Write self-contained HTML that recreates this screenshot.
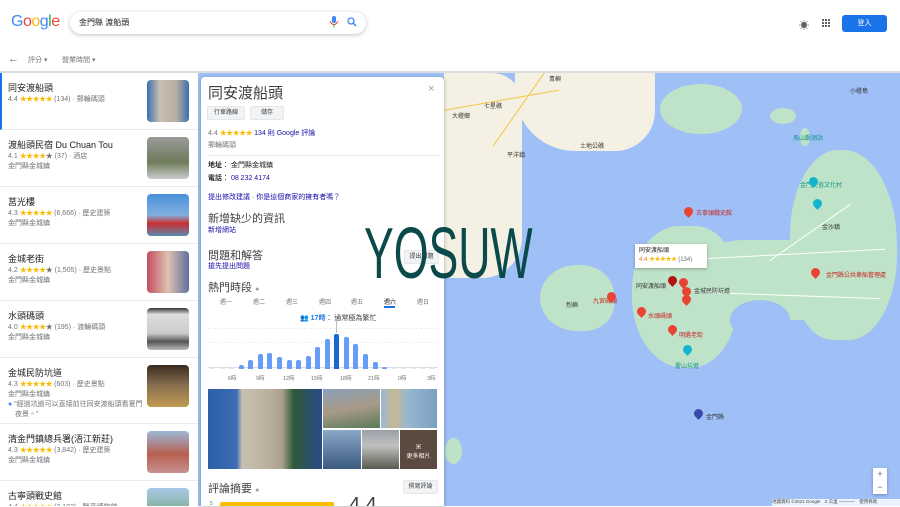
<!DOCTYPE html>
<html><head><meta charset="utf-8">
<style>
*{margin:0;padding:0;box-sizing:border-box}
body{width:900px;height:506px;overflow:hidden;background:#fff;font-family:"Liberation Sans","Noto Sans CJK TC",sans-serif;position:relative;color:#202124}
.a{position:absolute}
.s{color:#70757a;font-size:7px}
.st{color:#fbbc04;letter-spacing:-0.5px}
.li{position:absolute;left:0;width:198px;border-bottom:1px solid #e8eaed;background:#fff;overflow:hidden}
.li .t{position:absolute;left:8px;top:8px;font-size:9px;color:#202124}
.li .r{position:absolute;left:8px;top:21px;font-size:7px;color:#70757a}
.li .d{position:absolute;left:8px;top:31px;font-size:7px;color:#70757a}
.li .im{position:absolute;left:147px;top:7px;width:42px;height:42px;border-radius:4px}
.lnk{color:#1a0dab}
.btn{position:absolute;background:#f1f3f4;border:1px solid #e4e6e8;border-radius:2px;font-size:6px;text-align:center;line-height:12px;color:#3c4043}
.bar{position:absolute;width:5px;background:#669df6;border-radius:2px 2px 0 0}
.pin{position:absolute;width:9px;height:9px;border-radius:50% 50% 50% 0;transform:rotate(-45deg);background:#ea4335}
.ml{position:absolute;font-size:6px;color:#c5221f;white-space:nowrap}
.g{position:absolute;background:#bfe3c8}
.b{position:absolute;background:#f4f0e3}
</style></head><body>
<!-- map -->
<div class="a" style="left:198px;top:73px;width:702px;height:433px;background:#9fc0f7"></div>
<div class="b" style="left:444px;top:73px;width:78px;height:205px;border-radius:0 30px 40px 0"></div>
<div class="b" style="left:515px;top:73px;width:140px;height:78px;border-radius:0 0 40px 60px"></div>
<div class="g" style="left:660px;top:84px;width:82px;height:50px;border-radius:50%"></div>
<div class="g" style="left:770px;top:108px;width:26px;height:16px;border-radius:50%"></div>
<div class="g" style="left:800px;top:128px;width:10px;height:18px;border-radius:50%"></div>
<div class="g" style="left:790px;top:150px;width:107px;height:190px;border-radius:45% 50% 45% 40%"></div>
<div class="g" style="left:700px;top:240px;width:150px;height:80px;border-radius:30% 20% 30% 40%"></div>
<div class="g" style="left:632px;top:226px;width:105px;height:142px;border-radius:45% 40% 45% 50%"></div>
<div class="a" style="left:730px;top:300px;width:60px;height:40px;border-radius:50%;background:#9fc0f7"></div>
<div class="g" style="left:540px;top:265px;width:74px;height:66px;border-radius:50% 45% 40% 50%"></div>
<div class="g" style="left:445px;top:438px;width:17px;height:26px;border-radius:50%"></div>
<div class="a" style="left:645px;top:255px;width:240px;height:0;border-top:1px solid #fff;transform:rotate(-3deg)"></div>
<div class="a" style="left:700px;top:295px;width:180px;height:0;border-top:1px solid #fff;transform:rotate(2deg)"></div>
<div class="a" style="left:760px;top:232px;width:100px;height:0;border-top:1px solid #fff;transform:rotate(-35deg)"></div>
<div class="a" style="left:470px;top:100px;width:110px;height:0;border-top:1.5px solid #f6c545;transform:rotate(-55deg)"></div>
<div class="a" style="left:440px;top:100px;width:120px;height:0;border-top:1.5px solid #f6c545;transform:rotate(-10deg)"></div>
<div class="ml" style="left:549px;top:74px;color:#333">青嶼</div>
<div class="ml" style="left:850px;top:86px;color:#333">小嶝島</div>
<div class="ml" style="left:484px;top:101px;color:#333">七星礁</div>
<div class="ml" style="left:452px;top:111px;color:#333">大嶝鄉</div>
<div class="ml" style="left:580px;top:141px;color:#333">土地公礁</div>
<div class="ml" style="left:507px;top:150px;color:#333">平洋鎮</div>
<div class="ml" style="left:793px;top:133px;color:#12928c">馬山觀測站</div>
<div class="ml" style="left:800px;top:180px;color:#12928c">金門民俗文化村</div>
<div class="ml" style="left:822px;top:222px;color:#333">金沙鎮</div>
<div class="ml" style="left:696px;top:208px">古寧頭戰史館</div>
<div class="ml" style="left:826px;top:270px">金門縣公共車船管理處</div>
<div class="ml" style="left:593px;top:296px">九宮碼頭</div>
<div class="ml" style="left:648px;top:311px">水頭碼頭</div>
<div class="ml" style="left:679px;top:330px">明遺老街</div>
<div class="ml" style="left:694px;top:286px;color:#333">金城民防坑道</div>
<div class="ml" style="left:675px;top:361px;color:#12928c">翟山坑道</div>
<div class="ml" style="left:706px;top:412px;color:#333">金門縣</div>
<div class="ml" style="left:566px;top:300px;color:#333">烈嶼</div>
<div class="ml" style="left:636px;top:281px;color:#333">同安渡船頭</div>
<div class="pin" style="left:684px;top:207px"></div>
<div class="pin" style="left:811px;top:268px"></div>
<div class="pin" style="left:607px;top:292px"></div>
<div class="pin" style="left:637px;top:307px"></div>
<div class="pin" style="left:668px;top:325px"></div>
<div class="pin" style="left:668px;top:276px;background:#b31412"></div>
<div class="pin" style="left:679px;top:278px"></div>
<div class="pin" style="left:682px;top:287px"></div>
<div class="pin" style="left:682px;top:295px"></div>
<div class="pin" style="left:809px;top:177px;background:#12b5cb"></div>
<div class="pin" style="left:813px;top:199px;background:#12b5cb"></div>
<div class="pin" style="left:683px;top:345px;background:#12b5cb"></div>
<div class="pin" style="left:694px;top:409px;background:#3949ab"></div>
<div class="a" style="left:635px;top:244px;width:72px;height:24px;background:#fff;box-shadow:0 1px 3px rgba(0,0,0,.3);font-size:6px;padding:3px 4px;line-height:9px">同安渡船頭<br><span style="color:#e7711b">4.4</span> <span class="st">★★★★★</span> <span style="color:#70757a">(134)</span></div>
<div class="a" style="left:873px;top:468px;width:14px;height:26px;background:#fff;box-shadow:0 1px 3px rgba(0,0,0,.3);font-size:9px;text-align:center;line-height:13px;color:#666">+<br>−</div>
<div class="a" style="left:772px;top:499px;width:128px;height:7px;background:rgba(255,255,255,.8);font-size:4.5px;color:#444;white-space:nowrap;overflow:hidden">地圖資料 ©2021 Google　2 公里 ─────　使用條款</div>

<!-- header -->
<div class="a" style="left:0;top:0;width:900px;height:71px;background:#fff"></div>
<div class="a" style="left:11px;top:13px;font-size:16px;letter-spacing:-0.5px"><span style="color:#4285f4">G</span><span style="color:#ea4335">o</span><span style="color:#fbbc05">o</span><span style="color:#4285f4">g</span><span style="color:#34a853">l</span><span style="color:#ea4335">e</span></div>
<div class="a" style="left:70px;top:12px;width:296px;height:22px;border-radius:11px;box-shadow:0 1px 4px rgba(0,0,0,.25);background:#fff"></div>
<div class="a" style="left:79px;top:17px;font-size:8px">金門縣 渡船頭</div>
<svg class="a" style="left:329px;top:16px" width="10" height="12" viewBox="0 0 10 12"><rect x="3" y="0" width="4" height="7" rx="2" fill="#4285f4"/><path d="M1.5 5a3.5 3.5 0 0 0 7 0" stroke="#ea4335" fill="none" stroke-width="1"/><rect x="4.5" y="8.5" width="1" height="3" fill="#34a853"/></svg>
<svg class="a" style="left:347px;top:17px" width="10" height="10" viewBox="0 0 10 10"><circle cx="4" cy="4" r="3" stroke="#4285f4" stroke-width="1.3" fill="none"/><path d="M6.2 6.2L9 9" stroke="#4285f4" stroke-width="1.5" fill="none"/></svg>
<div class="a" style="left:799px;top:17px;font-size:10px;color:#5f6368">☀</div>
<svg class="a" style="left:822px;top:19px" width="8" height="8"><g fill="#5f6368"><rect x="0" y="0" width="2" height="2"/><rect x="3" y="0" width="2" height="2"/><rect x="6" y="0" width="2" height="2"/><rect x="0" y="3" width="2" height="2"/><rect x="3" y="3" width="2" height="2"/><rect x="6" y="3" width="2" height="2"/><rect x="0" y="6" width="2" height="2"/><rect x="3" y="6" width="2" height="2"/><rect x="6" y="6" width="2" height="2"/></g></svg>
<div class="a" style="left:842px;top:15px;width:45px;height:17px;background:#1a73e8;border-radius:3px;color:#fff;font-size:7px;text-align:center;line-height:17px">登入</div>
<div class="a" style="left:8px;top:53px;font-size:11px;color:#5f6368">←</div>
<div class="a" style="left:28px;top:55px;font-size:7px;color:#70757a">評分 ▾</div>
<div class="a" style="left:62px;top:55px;font-size:7px;color:#70757a">營業時間 ▾</div>
<div class="a" style="left:0;top:71px;width:900px;height:2px;background:#dadce0"></div>

<!-- list -->
<div class="li" style="top:73px;height:57px;border-left:2px solid #1a73e8"><div class="t" style="left:6px">同安渡船頭</div><div class="r" style="left:6px">4.4 <span class="st">★★★★★</span> (134) · 郵輪碼頭</div><div class="im" style="left:145px;background:linear-gradient(90deg,#3b6fb0 0,#c8c0b0 30%,#b8ada0 70%,#3b6fb0 100%)"></div></div>
<div class="li" style="top:130px;height:57px"><div class="t">渡船頭民宿 Du Chuan Tou</div><div class="r">4.1 <span class="st">★★★★</span>★ (37) · 酒店</div><div class="d">金門縣金城鎮</div><div class="im" style="background:linear-gradient(180deg,#9a9a9a,#6e7b5a 60%,#ccc)"></div></div>
<div class="li" style="top:187px;height:57px"><div class="t">莒光樓</div><div class="r">4.3 <span class="st">★★★★★</span> (6,666) · 歷史建築</div><div class="d">金門縣金城鎮</div><div class="im" style="background:linear-gradient(180deg,#4a90d9,#7fb0e0 50%,#c83030 70%,#5a8ab0)"></div></div>
<div class="li" style="top:244px;height:57px"><div class="t">金城老街</div><div class="r">4.2 <span class="st">★★★★</span>★ (1,505) · 歷史景點</div><div class="d">金門縣金城鎮</div><div class="im" style="background:linear-gradient(90deg,#c05060,#e0c0b0 50%,#6070a0)"></div></div>
<div class="li" style="top:301px;height:57px"><div class="t">水頭碼頭</div><div class="r">4.0 <span class="st">★★★★</span>★ (195) · 渡輪碼頭</div><div class="d">金門縣金城鎮</div><div class="im" style="background:linear-gradient(180deg,#333 0,#ddd 15%,#ccc 60%,#555 80%,#bbb)"></div></div>
<div class="li" style="top:358px;height:66px"><div class="t">金城民防坑道</div><div class="r">4.3 <span class="st">★★★★★</span> (603) · 歷史景點</div><div class="d">金門縣金城鎮</div><div class="d" style="top:41px;left:8px"><span style="color:#4285f4">●</span> "經過坑道可以直接前往同安渡船頭看夏門<br>　夜景。"</div><div class="im" style="background:linear-gradient(180deg,#3a2a20,#8a7050 50%,#c09a50)"></div></div>
<div class="li" style="top:424px;height:57px"><div class="t">清金門鎮總兵署(浯江新莊)</div><div class="r">4.3 <span class="st">★★★★★</span> (3,842) · 歷史建築</div><div class="d">金門縣金城鎮</div><div class="im" style="background:linear-gradient(180deg,#9ab8d8,#b86050 55%,#c89090)"></div></div>
<div class="li" style="top:481px;height:25px;border-bottom:none"><div class="t">古寧頭戰史館</div><div class="r">4.4 <span class="st">★★★★★</span> (3,182) · 戰爭博物館</div><div class="im" style="background:linear-gradient(180deg,#aac8e8,#5a9a50)"></div></div>

<!-- panel -->
<div class="a" style="left:201px;top:77px;width:243px;height:429px;background:#fff;border-radius:4px 4px 0 0;box-shadow:0 1px 4px rgba(0,0,0,.3)">
<div class="a" style="left:7px;top:5px;font-size:15px;color:#3c4043">同安渡船頭</div>
<div class="a" style="left:227px;top:6px;font-size:11px;color:#9aa0a6">×</div>
<div class="btn" style="left:6px;top:29px;width:38px;height:14px">行車路線</div>
<div class="btn" style="left:49px;top:29px;width:34px;height:14px">儲存</div>
<div class="a s" style="left:7px;top:51px">4.4 <span class="st">★★★★★</span> <span class="lnk">134 則 Google 評論</span></div>
<div class="a s" style="left:7px;top:63px">郵輪碼頭</div>
<div class="a" style="left:7px;top:78px;width:231px;height:1px;background:#e8eaed"></div>
<div class="a" style="left:7px;top:83px;font-size:7px"><b>地址</b>： 金門縣金城鎮</div>
<div class="a" style="left:7px;top:96px;font-size:7px"><b>電話</b>： <span class="lnk">08 232 4174</span></div>
<div class="a lnk" style="left:7px;top:115px;font-size:7px">提出修改建議 · 你是這個商家的擁有者嗎？</div>
<div class="a" style="left:7px;top:133px;font-size:11px;color:#3c4043">新增缺少的資訊</div>
<div class="a lnk" style="left:7px;top:148px;font-size:7px">新增網站</div>
<div class="a" style="left:7px;top:170px;font-size:11px;color:#3c4043">問題和解答</div>
<div class="a lnk" style="left:7px;top:184px;font-size:7px">搶先提出問題</div>
<div class="btn" style="left:203px;top:173px;width:35px;height:14px">提出問題</div>
<div class="a" style="left:7px;top:202px;font-size:11px;color:#3c4043">熱門時段 <span style="font-size:7px;color:#9aa0a6">●</span></div>
<div class="a" style="left:0;top:220px;width:243px;font-size:6px;color:#70757a">
<span class="a" style="left:19px">週一</span><span class="a" style="left:52px">週二</span><span class="a" style="left:85px">週三</span><span class="a" style="left:118px">週四</span><span class="a" style="left:150px">週五</span><span class="a" style="left:183px;color:#202124">週六</span><span class="a" style="left:216px">週日</span></div>
<div class="a" style="left:183px;top:229px;width:11px;height:2px;background:#1a73e8"></div>
<div class="a" style="left:99px;top:236px;font-size:7px;color:#3c4043"><span style="color:#1a73e8;font-weight:bold">👥 17時</span>： 通常極為繁忙</div>
<div class="a" style="left:7px;top:251px;width:230px;border-top:1px dashed #eee;height:40px;border-bottom:1px solid #dadce0"></div>
<div class="a" style="left:7px;top:265px;width:230px;border-top:1px dashed #f0f0f0"></div>
</div>
<!-- bars -->
<div class="bar" style="left:210px;top:367px;height:2px;background:#e0e6ee"></div>
<div class="bar" style="left:220px;top:367px;height:2px;background:#e0e6ee"></div>
<div class="bar" style="left:229px;top:367px;height:2px;background:#e0e6ee"></div>
<div class="bar" style="left:239px;top:365px;height:4px"></div>
<div class="bar" style="left:248px;top:360px;height:9px"></div>
<div class="bar" style="left:258px;top:354px;height:15px"></div>
<div class="bar" style="left:267px;top:353px;height:16px"></div>
<div class="bar" style="left:277px;top:357px;height:12px"></div>
<div class="bar" style="left:287px;top:360px;height:9px"></div>
<div class="bar" style="left:296px;top:360px;height:9px"></div>
<div class="bar" style="left:306px;top:356px;height:13px"></div>
<div class="bar" style="left:315px;top:347px;height:22px"></div>
<div class="bar" style="left:325px;top:339px;height:30px"></div>
<div class="bar" style="left:334px;top:334px;height:35px;background:#1967d2"></div>
<div class="bar" style="left:344px;top:337px;height:32px"></div>
<div class="bar" style="left:353px;top:344px;height:25px"></div>
<div class="bar" style="left:363px;top:354px;height:15px"></div>
<div class="bar" style="left:373px;top:362px;height:7px"></div>
<div class="bar" style="left:382px;top:367px;height:2px"></div>
<div class="bar" style="left:392px;top:367px;height:2px;background:#e0e6ee"></div>
<div class="bar" style="left:401px;top:367px;height:2px;background:#e0e6ee"></div>
<div class="bar" style="left:411px;top:367px;height:2px;background:#e0e6ee"></div>
<div class="bar" style="left:420px;top:367px;height:2px;background:#e0e6ee"></div>
<div class="bar" style="left:430px;top:367px;height:2px;background:#e0e6ee"></div>
<div class="a" style="left:336px;top:318px;width:1px;height:15px;background:#bbb"></div>
<div class="a" style="left:0;top:374px;width:900px;font-size:5.5px;color:#70757a;white-space:nowrap">
<span class="a" style="left:228px">6時</span><span class="a" style="left:256px">9時</span><span class="a" style="left:283px">12時</span><span class="a" style="left:311px">15時</span><span class="a" style="left:340px">18時</span><span class="a" style="left:368px">21時</span><span class="a" style="left:398px">0時</span><span class="a" style="left:427px">3時</span></div>
<!-- photos -->
<div class="a" style="left:208px;top:389px;width:114px;height:80px;background:linear-gradient(90deg,#2d5fa8 0,#3a6db5 25%,#c9c0b0 30%,#b8ae9e 55%,#a8a090 65%,#2f5a3a 75%,#2a4a8a 100%)"></div>
<div class="a" style="left:323px;top:389px;width:57px;height:39px;background:linear-gradient(170deg,#8aa0b8,#a89a88 50%,#5a7a5a)"></div>
<div class="a" style="left:381px;top:389px;width:56px;height:39px;background:linear-gradient(90deg,#9ab8d0,#c8b890 25%,#9ab8d0 45%,#7aa0c0)"></div>
<div class="a" style="left:323px;top:430px;width:38px;height:39px;background:linear-gradient(180deg,#8aa8c8,#3a5a80)"></div>
<div class="a" style="left:362px;top:430px;width:37px;height:39px;background:linear-gradient(180deg,#9aa0a8,#c0c0c0 40%,#5a5a50)"></div>
<div class="a" style="left:400px;top:430px;width:37px;height:39px;background:#5a4a40;color:#fff;font-size:6px;text-align:center;padding-top:12px">▣<br>更多相片</div>
<div class="a" style="left:208px;top:480px;font-size:11px;color:#3c4043">評論摘要 <span style="font-size:7px;color:#9aa0a6">●</span></div>
<div class="btn" style="left:403px;top:480px;width:35px;height:14px">撰寫評論</div>
<div class="a" style="left:210px;top:501px;font-size:5px;color:#70757a">5</div>
<div class="a" style="left:220px;top:502px;width:114px;height:4px;background:#fbbc04;border-radius:2px 2px 0 0"></div>
<div class="a" style="left:349px;top:494px;height:12px;overflow:hidden;font-size:20px;line-height:22px;color:#3c4043">4.4</div>

<!-- watermark -->
<div class="a" style="left:364px;top:214px;font-size:72px;color:#0b4a4a;font-family:'Liberation Sans',sans-serif;transform:scaleX(0.62);transform-origin:left top;line-height:80px;white-space:nowrap">YOSUW</div>
</body></html>
